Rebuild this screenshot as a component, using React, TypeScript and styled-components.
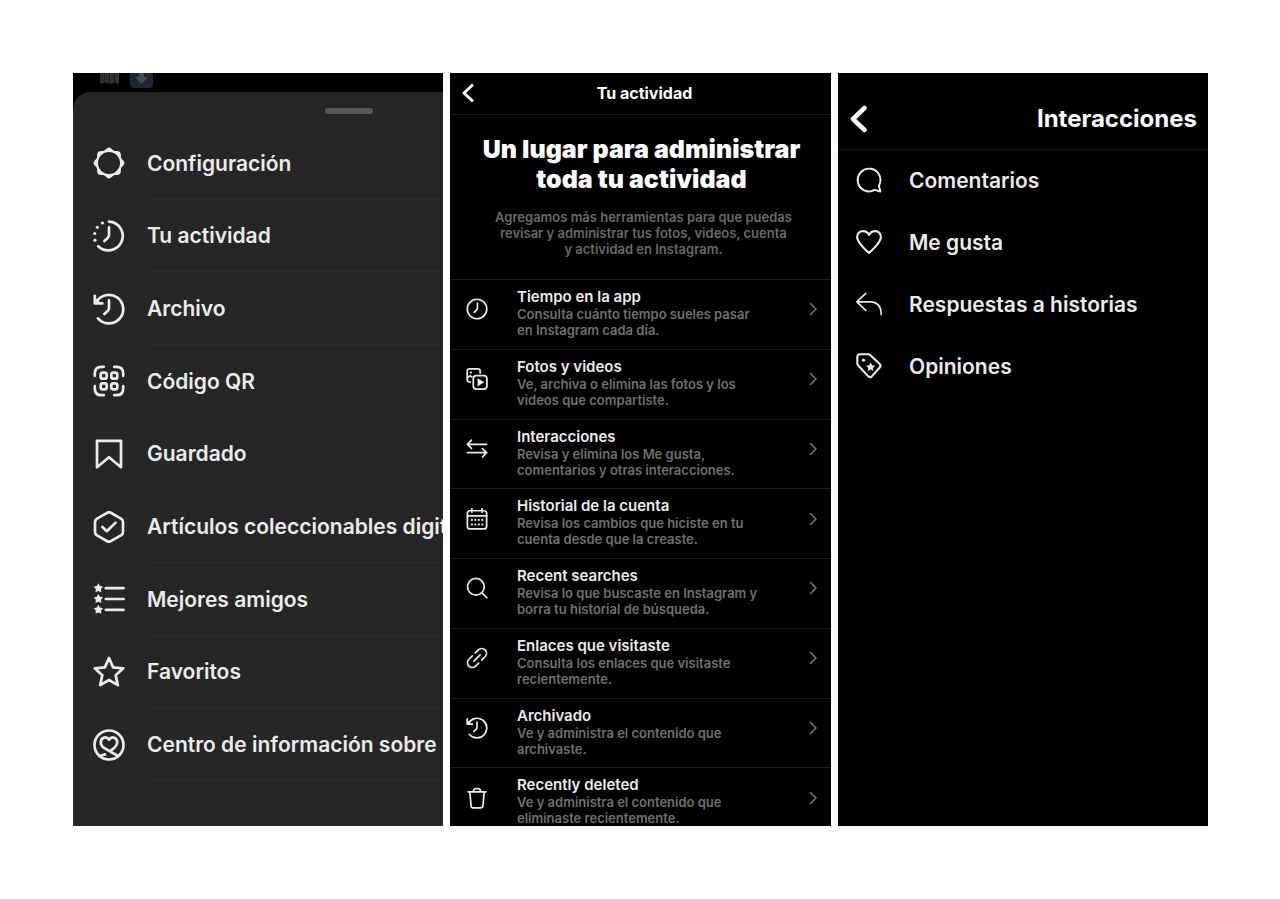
import React from "react";
import styled, { createGlobalStyle } from "styled-components";

const Global = createGlobalStyle`
  * { box-sizing: border-box; }
  body { margin: 0; background: #fff; font-family: Inter, "Liberation Sans", sans-serif; }
  h1, h2, p, ul { margin: 0; padding: 0; }
  ul { list-style: none; }
  button { font: inherit; color: inherit; background: none; border: 0; padding: 0; text-align: left; cursor: pointer; }
  svg { display: block; flex: none; }
`;

const Gallery = styled.main`
  display: grid;
  grid-template-columns: minmax(0, 370fr) minmax(0, 381fr) minmax(0, 370fr);
  gap: 7px;
  height: 100vh;
  padding: 73px 72px 73px 73px;
`;

const Panel = styled.section`
  display: flex;
  flex-direction: column;
  min-height: 0;
  overflow: hidden;
  background: #000;
  color: #ebebeb;
`;

const Backdrop = styled.div`
  display: flex;
  gap: 10px;
  height: 19px;
  flex: none;
  padding-left: 26px;
`;

const Sheet = styled.div`
  display: flex;
  flex-direction: column;
  flex: 1;
  width: 149%;
  background: #262626;
  border-top-left-radius: 18px;
  padding-bottom: 45px;
`;

const Grip = styled.div`
  width: 48px;
  height: 6px;
  flex: none;
  margin: 16px auto 13px;
  border-radius: 3px;
  background: #5a5a5a;
`;

const MenuList = styled.ul`
  display: grid;
  grid-auto-rows: 1fr;
  flex: 1;
`;

const MenuItem = styled.li`
  display: flex;
`;

const MenuButton = styled.button`
  display: flex;
  align-items: stretch;
  gap: 22px;
  flex: 1;
  padding-left: 20px;
  font-size: 21px;
  font-weight: 600;
  white-space: nowrap;
  svg { align-self: center; }
`;

const MenuLabel = styled.span`
  display: flex;
  align-items: center;
  flex: 1;
  padding-top: 1px;
  border-bottom: 1px solid #2d2d2d;
`;

const Bar = styled.header<{ $tall?: boolean }>`
  display: flex;
  align-items: center;
  justify-content: space-between;
  flex: none;
  height: ${(p) => (p.$tall ? 77 : 42)}px;
  padding: ${(p) => (p.$tall ? "15px 11px 0 12px" : "0 12px 2px")};
  border-bottom: 1px solid ${(p) => (p.$tall ? "#161616" : "#1f1f1f")};
  color: #fff;
`;

const BarTitle = styled.h2<{ $large?: boolean }>`
  font-size: ${(p) => (p.$large ? 24 : 16)}px;
  font-weight: 700;
  line-height: 28px;
`;

const BarSpacer = styled.span`
  width: 4px;
`;

const Hero = styled.div`
  flex: none;
  padding: 19px 24px 22px 26px;
  text-align: center;
`;

const HeroTitle = styled.h1`
  font-size: 25px;
  font-weight: 900;
  line-height: 30px;
  color: #fff;
`;

const HeroText = styled.p`
  margin-top: 15px;
  padding-left: 4px;
  font-size: 13px;
  font-weight: 600;
  line-height: 16px;
  color: #696969;
`;

const ActivityList = styled.ul`
  display: grid;
  grid-auto-rows: 1fr;
  flex: 1;
  margin-bottom: -11px;
`;

const ActivityItem = styled.li`
  display: flex;
  border-top: 1px solid #1f1f1f;
`;

const ActivityButton = styled.button`
  display: flex;
  align-items: center;
  flex: 1;
  gap: 29px;
  padding: 0 14px 10px 16px;
`;

const ActivityText = styled.span`
  display: flex;
  flex-direction: column;
  align-self: flex-start;
  flex: 1;
  padding-top: 8px;
`;

const ActivityTitle = styled.span`
  font-size: 15px;
  font-weight: 600;
  line-height: 18px;
`;

const ActivityDesc = styled.span`
  font-size: 13px;
  font-weight: 600;
  line-height: 16px;
  color: #6f6f6f;
`;

const InteractionButton = styled.button`
  display: flex;
  align-items: center;
  gap: 27px;
  width: 100%;
  height: 62px;
  padding: 0 0 2px 18px;
  font-size: 21px;
  font-weight: 600;
`;

type IconProps = { size: number; stroke?: number; children: React.ReactNode };

/* Icons share a 32-unit grid centred on the origin. */
const Icon = ({ size, stroke = 2.4, children }: IconProps) => (
  <svg
    width={size}
    height={size}
    viewBox="-16 -16 32 32"
    fill="none"
    stroke="currentColor"
    strokeWidth={stroke}
    strokeLinecap="round"
    strokeLinejoin="round"
    aria-hidden="true"
  >
    {children}
  </svg>
);

type ChevronProps = { width: number; height: number; stroke: number; d: string; color?: string };

const Chevron = ({ width, height, stroke, d, color = "currentColor" }: ChevronProps) => (
  <svg
    width={width}
    height={height}
    viewBox={`0 0 ${width} ${height}`}
    fill="none"
    stroke={color}
    strokeWidth={stroke}
    strokeLinecap="round"
    strokeLinejoin="round"
    aria-hidden="true"
  >
    <path d={d} />
  </svg>
);

const starPoints = (r: number, inner: number) =>
  Array.from({ length: 10 }, (_, i) => {
    const a = (Math.PI / 5) * i - Math.PI / 2;
    const d = i % 2 ? inner : r;
    return `${(Math.cos(a) * d).toFixed(2)},${(Math.sin(a) * d).toFixed(2)}`;
  }).join(" ");

const scallop =
  Array.from({ length: 96 }, (_, i) => {
    const a = (Math.PI / 48) * i;
    const d = 14.3 + 1.1 * Math.cos(8 * a);
    return `${i ? "L" : "M"}${(Math.cos(a) * d).toFixed(2)} ${(Math.sin(a) * d).toFixed(2)}`;
  }).join("") + "ZM11 0A11 11 0 1 0-11 0A11 11 0 1 0 11 0Z";

const Solid = ({ children }: { children: React.ReactNode }) => (
  <g fill="currentColor" stroke="none">{children}</g>
);

const historyArt = (
  <>
    <path d="M-12.8-6.4A14.3 14.3 0 1 1-11 9.4" />
    <path d="M-14.2-13.2V-5.6H-6.6" />
    <path d="M-13.4-9.4L-10.4-6.4" />
    <path d="M0-8.6V-1.2Q0 .6-1.3 1.9L-4.6 5" />
  </>
);

const gear = (
  <Solid>
    <path fillRule="evenodd" d={scallop} />
  </Solid>
);

const activity = (
  <>
    <path d="M0-14.4A14.4 14.4 0 1 1-10.8 10.2" />
    <path d="M0-8.6V-1.2Q0 .6-1.3 1.9L-4.6 5" />
    <Solid>
      <circle cx="-6.6" cy="-13" r="1.6" />
      <circle cx="-11.7" cy="-8.7" r="1.6" />
      <circle cx="-14.3" cy="-2.5" r="1.6" />
      <circle cx="-14" cy="4.2" r="1.6" />
    </Solid>
  </>
);

const qr = (
  <>
    <path d="M-14.2-5.2V-7.4Q-14.2-14.2-7.4-14.2H-5.2M5.2-14.2H7.4Q14.2-14.2 14.2-7.4V-5.2M14.2 5.2V7.4Q14.2 14.2 7.4 14.2H5.2M-5.2 14.2H-7.4Q-14.2 14.2-14.2 7.4V5.2" />
    {[[-5.3, -5.3], [5.3, -5.3], [-5.3, 5.3], [5.3, 5.3]].map(([x, y]) => (
      <rect key={`${x}${y}`} x={x - 3} y={y - 3} width="6" height="6" rx="2" />
    ))}
  </>
);

const bookmark = <path d="M-12-13.2H12V13.2L0 3.2-12 13.2Z" />;

const collectible = (
  <>
    <path d="M-1.8-14.2Q0-15.2 1.8-14.2L12-8.4Q14-7.2 14-5V5Q14 7.2 12 8.4L1.8 14.2Q0 15.2-1.8 14.2L-12 8.4Q-14 7.2-14 5V-5Q-14-7.2-12-8.4Z" />
    <path d="M-6.6 0L-2.2 4.2 6.6-4.4" />
  </>
);

const bestFriends = (
  <>
    <path d="M-3.2-10.8H14.6M-3.2 0H14.6M-3.2 10.8H14.6" />
    <Solid>
      {[-10.8, 0, 10.8].map((y) => (
        <polygon key={y} points={starPoints(5, 2.7)} transform={`translate(-10.6 ${y})`} />
      ))}
    </Solid>
  </>
);

const favorite = <polygon points={starPoints(15, 7)} transform="translate(0 1)" />;

const healthInfo = (
  <>
    <circle r="14.5" />
    <path d="M9 11L-4.6 3.2C-7.4 1.2-8.4-.8-8.2-3.2C-7.8-8-2.2-9 0-5.2C2.2-9 7.8-8 8.2-3.2C8.4-.2 6.2 2.4 2.4 5.2" />
    <path d="M-9.4 11L-4 9.4" />
  </>
);

const clock = (
  <>
    <circle r="14.2" />
    <path d="M.6-8.6V-1.8Q.6 0-.7 1.3L-4 5" />
  </>
);

const media = (
  <>
    <path d="M-10 4.2H-11.2Q-14.2 4.2-14.2 1.2V-11.4Q-14.2-14.6-11-14.6H1.4Q4.6-14.6 4.6-11.4V-8.6" />
    <path d="M-14-1.6L-10.4-4.6-7.4-3" />
    <rect x="-5.4" y="-4.8" width="19.8" height="19.4" rx="4.4" />
    <Solid>
      <circle cx="-9" cy="-9.6" r="1.6" />
      <path d="M.8-1.2V10.8L10.6 4.8Z" />
    </Solid>
  </>
);

const swap = (
  <path d="M14-6.8H-14M-8-12.8L-14-6.8-8-.8M-14 5.4H14M8-.6L14 5.4 8 11.4" />
);

const calendar = (
  <>
    <rect x="-14" y="-12" width="28" height="26.4" rx="4" />
    <path d="M-14-4.4H14M-7.4-14.8V-9.8M7.4-14.8V-9.8" />
    <Solid>
      {[1.4, 8].map((y) =>
        [-7.4, -2.4, 2.6, 7.6].map((x) => <circle key={`${x}-${y}`} cx={x} cy={y} r="1.6" />),
      )}
    </Solid>
  </>
);

const search = (
  <>
    <circle cx="-1.6" cy="-1.8" r="12.2" />
    <path d="M7.2 7L14.4 14.2" />
  </>
);

const link = (
  <g transform="rotate(-45)">
    <path d="M-2.6-7H-9.6A7 7 0 0 0-9.6 7H-3.6M2.6 7H9.6A7 7 0 0 0 9.6-7H3.6M-6.4 0H6.4" />
  </g>
);

const trash = (
  <path d="M-13-9H13M-10.4-9L-8.6 11.6Q-8.3 14.4-5.6 14.4H5.6Q8.3 14.4 8.6 11.6L10.4-9M-5.4-9.2Q-5-13.6-1.6-13.6H1.6Q5-13.6 5.4-9.2" />
);

const comment = (
  <path d="M12.2 7A14 14 0 1 0 7 12.2L14 14.2Z" />
);

const heart = (
  <path d="M0 13.4C-4.6 9.6-14.6-.2-14.6-6.2C-14.6-10.6-11.6-13.4-7.8-13.4C-4.2-13.4-1.6-11.8 0-8.6C1.6-11.8 4.2-13.4 7.8-13.4C11.6-13.4 14.6-10.6 14.6-6.2C14.6-.2 4.6 9.6 0 13.4Z" />
);

const reply = (
  <path d="M-4-13L-15-2.6-4 7.8M-15-2.6H1Q15-2.6 15 13" />
);

const tag = (
  <>
    <path d="M-10.8-14.4H-1.4Q.4-14.4 1.8-13.2L13.2-2.4Q15.2-.4 13.2 1.8L3.4 12.8Q1.4 14.8-.8 12.8L-13-.2Q-14.4-1.6-14.4-3.4V-10.8Q-14.4-14.4-10.8-14.4Z" />
    <Solid>
      <circle cx="-6.8" cy="-7.2" r="2" />
      <polygon points={starPoints(5.8, 3)} transform="translate(2 1.4)" />
    </Solid>
  </>
);

const menu: [string, React.ReactNode][] = [
  ["Configuración", gear],
  ["Tu actividad", activity],
  ["Archivo", historyArt],
  ["Código QR", qr],
  ["Guardado", bookmark],
  ["Artículos coleccionables digit", collectible],
  ["Mejores amigos", bestFriends],
  ["Favoritos", favorite],
  ["Centro de información sobre", healthInfo],
];

const activities: [string, string, string, React.ReactNode][] = [
  ["Tiempo en la app", "Consulta cuánto tiempo sueles pasar", "en Instagram cada día.", clock],
  ["Fotos y videos", "Ve, archiva o elimina las fotos y los", "videos que compartiste.", media],
  ["Interacciones", "Revisa y elimina los Me gusta,", "comentarios y otras interacciones.", swap],
  ["Historial de la cuenta", "Revisa los cambios que hiciste en tu", "cuenta desde que la creaste.", calendar],
  ["Recent searches", "Revisa lo que buscaste en Instagram y", "borra tu historial de búsqueda.", search],
  ["Enlaces que visitaste", "Consulta los enlaces que visitaste", "recientemente.", link],
  ["Archivado", "Ve y administra el contenido que", "archivaste.", historyArt],
  ["Recently deleted", "Ve y administra el contenido que", "eliminaste recientemente.", trash],
];

const interactions: [string, React.ReactNode, number][] = [
  ["Comentarios", comment, 2.4],
  ["Me gusta", heart, 2.6],
  ["Respuestas a historias", reply, 2],
  ["Opiniones", tag, 2.6],
];

export default function App() {
  return (
    <>
      <Global />
      <Gallery>
        <Panel>
          <Backdrop aria-hidden="true">
            <svg width="21" height="12" viewBox="0 0 21 12">
              <path d="M1 0H20V11L15.500 9.500 10.500 11 5.500 9.500 1 11Z" fill="#303032" />
              <path d="M5.500 0V9.500M10.500 0V11M15.500 0V9.500" stroke="#1c1c1e" strokeWidth="1" />
            </svg>
            <svg width="23" height="15" viewBox="0 0 23 15">
              <path d="M0 0H23V11Q23 15 19 15H4Q0 15 0 11Z" fill="#1f2634" />
              <path d="M9 0H14V4H18L11.500 11 5 4H9Z" fill="#434a58" />
            </svg>
          </Backdrop>
          <Sheet>
            <Grip />
            <MenuList>
              {menu.map(([label, art]) => (
                <MenuItem key={label}>
                  <MenuButton type="button">
                    <Icon size={32} stroke={2.7}>{art}</Icon>
                    <MenuLabel>{label}</MenuLabel>
                  </MenuButton>
                </MenuItem>
              ))}
            </MenuList>
          </Sheet>
        </Panel>

        <Panel>
          <Bar>
            <button type="button" aria-label="Atrás">
              <Chevron width={12} height={18} stroke={3} d="M10 1.500L2 9 10 16.500" />
            </button>
            <BarTitle>Tu actividad</BarTitle>
            <BarSpacer />
          </Bar>
          <Hero>
            <HeroTitle>
              Un lugar para administrar
              <br />
              toda tu actividad
            </HeroTitle>
            <HeroText>
              Agregamos más herramientas para que puedas
              <br />
              revisar y administrar tus fotos, videos, cuenta
              <br />y actividad en Instagram.
            </HeroText>
          </Hero>
          <ActivityList>
            {activities.map(([title, first, second, art]) => (
              <ActivityItem key={title}>
                <ActivityButton type="button">
                  <Icon size={22} stroke={2.5}>{art}</Icon>
                  <ActivityText>
                    <ActivityTitle>{title}</ActivityTitle>
                    <ActivityDesc>
                      {first}
                      <br />
                      {second}
                    </ActivityDesc>
                  </ActivityText>
                  <Chevron width={8} height={14} stroke={1.5} color="#777" d="M1.500 1.500L7 7 1.500 12.500" />
                </ActivityButton>
              </ActivityItem>
            ))}
          </ActivityList>
        </Panel>

        <Panel>
          <Bar $tall>
            <button type="button" aria-label="Atrás">
              <Chevron width={17} height={28} stroke={4.5} d="M14.500 3L3 14 14.500 25" />
            </button>
            <BarTitle $large>Interacciones</BarTitle>
          </Bar>
          <ul>
            {interactions.map(([label, art, stroke]) => (
              <li key={label}>
                <InteractionButton type="button">
                  <Icon size={26} stroke={stroke}>{art}</Icon>
                  {label}
                </InteractionButton>
              </li>
            ))}
          </ul>
        </Panel>
      </Gallery>
    </>
  );
}
